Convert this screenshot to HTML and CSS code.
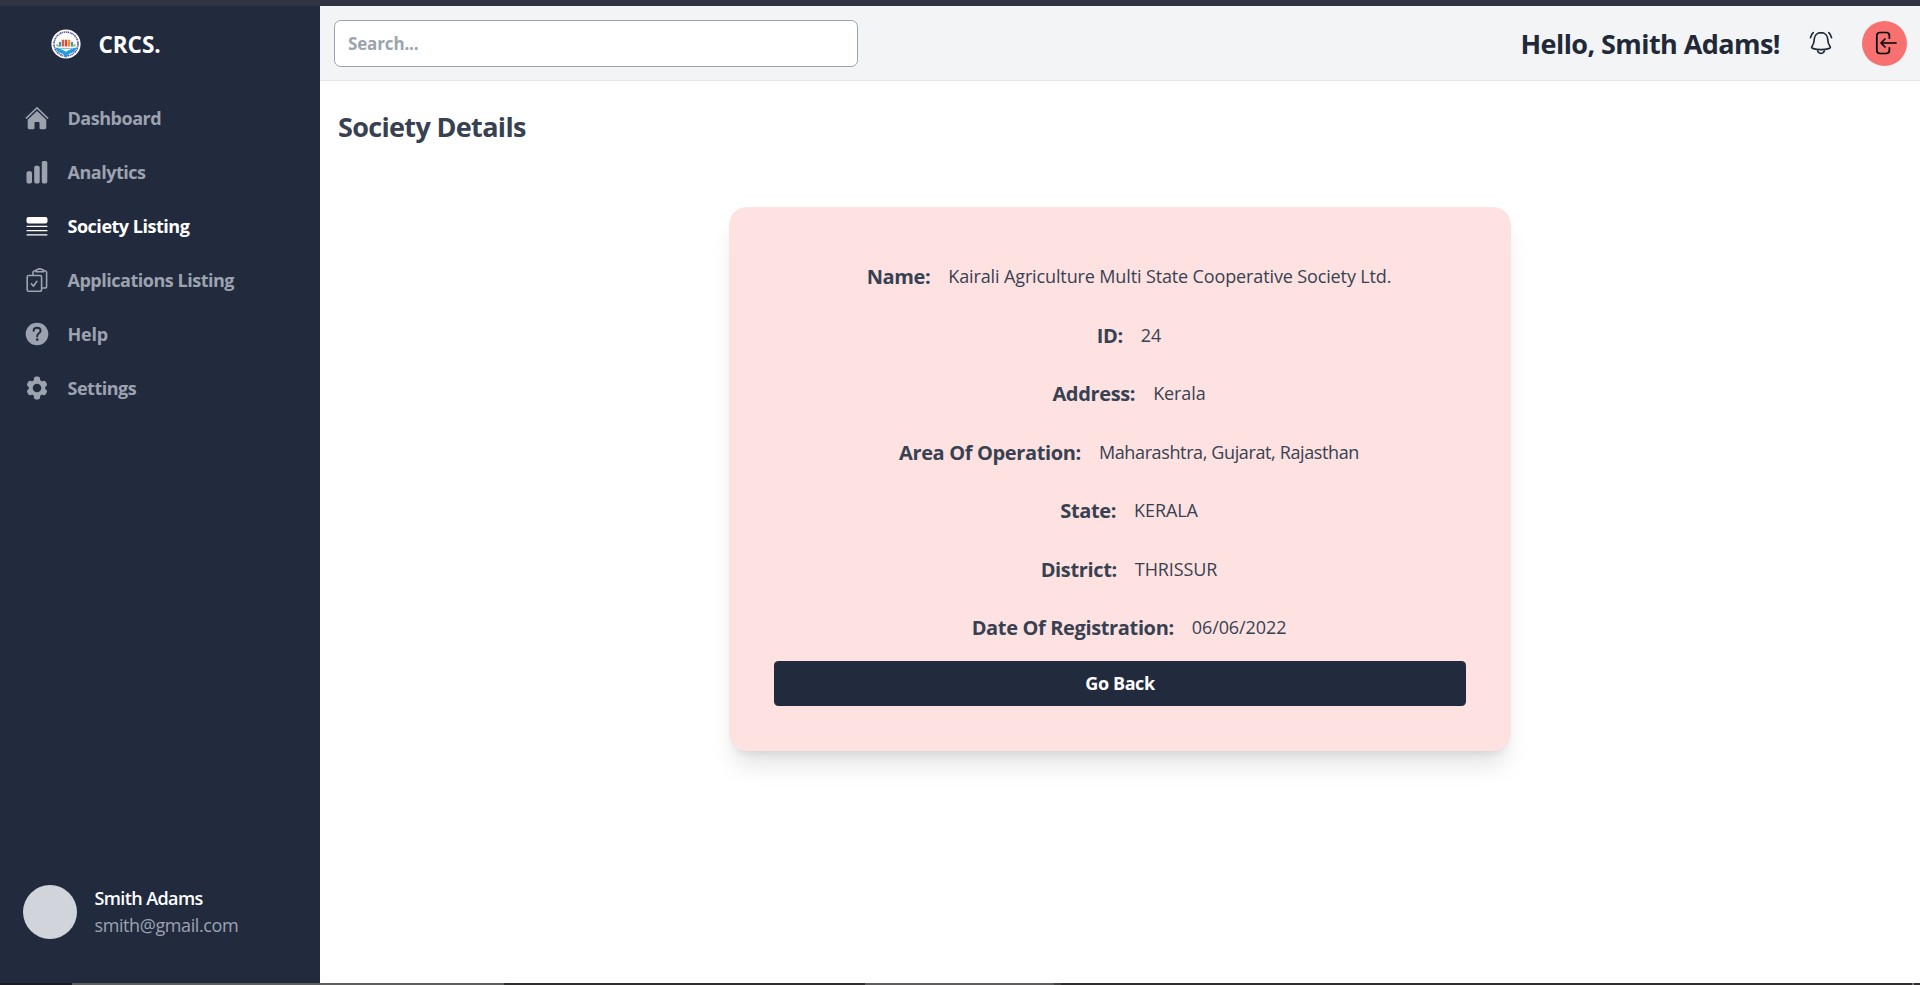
FILE: index.html
```html
<!DOCTYPE html>
<html lang="en">
<head>
<meta charset="utf-8">
<title>CRCS - Society Details</title>
<link rel="stylesheet" href="styles.css">
</head>
<body>
<div class="topline"></div>
<div class="app">
  <aside class="sidebar">
    <div class="brand">
      <svg class="brand-logo" viewBox="0 0 30 30">
        <circle cx="15" cy="15" r="14.6" fill="#fff"/>
        <circle cx="15" cy="15" r="12" fill="none" stroke="#56549a" stroke-width="1.7" stroke-dasharray="1.6 .7 .9 .6" pathLength="74"/>
        <path d="M4 18.500c3 0 5 1 7 2.200 2 .6 3 1 4 2.300 1-1.300 2-1.700 4-2.300 2-1.200 4-2.200 7-2.200-1.500 3.500-4.500 5.500-8 6.500L15 29l-3-4c-3.500-1-6.500-3-8-6.500z" fill="#239bdc"/>
        <path d="M9 19.500h12" stroke="#8fbfe0" stroke-width="1.300"/>
        <path d="M9 17.500v-4.500M21 17.500v-4.500" stroke="#3f9a9c" stroke-width="2.300"/>
        <path d="M12 17.500v-6.800" stroke="#e2574c" stroke-width="2.500"/>
        <path d="M15 17.500v-6.800" stroke="#e5443b" stroke-width="2.200"/>
        <path d="M18 17.500v-6.800" stroke="#f38a2c" stroke-width="2.500"/>
        <path d="M5.500 15.500l2 2M24.500 15.500l-2 2" stroke="#69b24b" stroke-width="1.200"/>
      </svg>
      <span class="brand-name">CRCS.</span>
    </div>
    <nav class="nav">
      <a class="nav-item">
        <svg class="icon" viewBox="0 0 24 24"><path d="M1.300 12.100 12 1.900l10.700 10.200" fill="none" stroke="currentColor" stroke-width="1.500" stroke-linecap="round" stroke-linejoin="round"/><path fill="currentColor" d="M12 4.900 2.700 13.700v7.700c0 1.100.8 1.900 1.900 1.900h3.700c.7 0 1.200-.5 1.200-1.200v-5.300c0-.4.300-.7.700-.7h3.600c.4 0 .7.300.7.700v5.300c0 .7.500 1.200 1.200 1.200h3.700c1.100 0 1.900-.8 1.900-1.900v-7.700z"/></svg>
        <span>Dashboard</span>
      </a>
      <a class="nav-item">
        <svg class="icon" viewBox="0 0 24 24" fill="currentColor"><rect x="1.500" y="11.300" width="5.500" height="12.200" rx="1.700"/><rect x="9.200" y="5.800" width="5.500" height="17.700" rx="1.700"/><rect x="16.800" y=".9" width="5.500" height="22.600" rx="1.700"/></svg>
        <span>Analytics</span>
      </a>
      <a class="nav-item active">
        <svg class="icon" viewBox="0 0 24 24" fill="currentColor"><rect x="1.500" y="3" width="21" height="6.500" rx="2"/><rect x="1.500" y="11.700" width="21" height="1.400" rx=".6"/><rect x="1.500" y="15.900" width="21" height="1.400" rx=".6"/><rect x="1.500" y="20.200" width="21" height="1.400" rx=".6"/></svg>
        <span>Society Listing</span>
      </a>
      <a class="nav-item">
        <svg class="icon" viewBox="0 0 24 24" fill="none" stroke="currentColor" stroke-width="1.600" stroke-linecap="round" stroke-linejoin="round"><rect x="2.200" y="7.500" width="14.400" height="15.800" rx="1.500"/><path d="M8 7.300V4.500A1.800 1.800 0 0 1 9.800 2.700h1M18.700 2.700h1.100a1.800 1.800 0 0 1 1.800 1.800v13.700a1.800 1.800 0 0 1-1.800 1.800H17"/><path d="M10.800 3.700V2.600c0-.4.300-.7.700-.7h.7C12.700 1.100 13.600.9 14.800.9s2.100.2 2.600 1h.6c.4 0 .7.300.7.700v1.100z"/><path d="m6.400 15.800 2 2.400 3.500-4.900"/></svg>
        <span>Applications Listing</span>
      </a>
      <a class="nav-item help">
        <svg class="icon" viewBox="0 0 24 24"><circle cx="12" cy="12" r="11.300" fill="currentColor"/><path d="M8.600 8.900c0-2 1.500-3.100 3.500-3.100s3.500 1.100 3.500 2.900c0 2.600-3.400 2.700-3.400 5.300v.4" fill="none" stroke="#222a3e" stroke-width="1.900" stroke-linecap="round"/><circle cx="12.200" cy="17.600" r="1.300" fill="#222a3e"/></svg>
        <span>Help</span>
      </a>
      <a class="nav-item">
        <svg class="icon" viewBox="1 1 22 22" fill="currentColor"><path fill-rule="evenodd" d="M11.078 1.500c-.917 0-1.699.663-1.850 1.567L9.050 4.889c-.02.12-.115.26-.297.348a7.493 7.493 0 0 0-.986.57c-.166.115-.334.126-.45.083L6.300 5.508a1.875 1.875 0 0 0-2.282.819l-.922 1.597a1.875 1.875 0 0 0 .432 2.385l.84.692c.095.078.17.229.154.43a7.598 7.598 0 0 0 0 1.139c.015.2-.059.352-.153.43l-.841.692a1.875 1.875 0 0 0-.432 2.385l.922 1.597a1.875 1.875 0 0 0 2.282.818l1.019-.382c.115-.043.283-.031.45.082.312.214.641.405.985.57.182.088.277.228.297.35l.178 1.821c.151.904.933 1.567 1.850 1.567h1.844c.916 0 1.699-.663 1.850-1.567l.178-1.822c.02-.12.114-.26.297-.349.344-.165.673-.356.985-.57.167-.114.335-.125.45-.082l1.020.382a1.875 1.875 0 0 0 2.280-.819l.923-1.597a1.875 1.875 0 0 0-.432-2.385l-.84-.692c-.095-.078-.17-.229-.154-.43a7.614 7.614 0 0 0 0-1.139c-.016-.2.059-.352.153-.43l.84-.692c.708-.582.891-1.590.433-2.385l-.922-1.597a1.875 1.875 0 0 0-2.282-.818l-1.020.382c-.114.043-.282.031-.449-.083a7.490 7.490 0 0 0-.985-.57c-.183-.087-.277-.227-.297-.348l-.179-1.822a1.875 1.875 0 0 0-1.850-1.567h-1.843ZM12 15.950a3.950 3.950 0 1 0 0-7.900 3.950 3.950 0 0 0 0 7.900Z"/></svg>
        <span>Settings</span>
      </a>
    </nav>
    <div class="user">
      <div class="avatar"></div>
      <div class="user-text">
        <div class="user-name">Smith Adams</div>
        <div class="user-mail">smith@gmail.com</div>
      </div>
    </div>
  </aside>
  <div class="main">
    <header class="header">
      <input class="search" type="text" placeholder="Search...">
      <div class="header-right">
        <span class="hello">Hello, Smith Adams!</span>
        <svg class="bell" viewBox="0 0 24 24" fill="none" stroke="currentColor" stroke-width="1.700" stroke-linecap="round" stroke-linejoin="round"><path d="M12 1.700c-3.900 0-6.500 2.700-6.700 6.300-.1 3.900-.7 5.300-2.200 7.200-.8 1.100-.5 1.900.5 2.200 2.700.9 5.500 1.300 8.400 1.300s5.700-.4 8.400-1.300c1-.3 1.300-1.100.5-2.200-1.500-1.900-2.100-3.300-2.200-7.200-.2-3.600-2.800-6.300-6.700-6.300zM8.500 18.700c.2 2.300 1.500 3.600 3.500 3.600s3.300-1.300 3.500-3.600M4.200 1.700C2.800 3 1.900 4.700 1.500 6.700M19.800 1.700c1.400 1.300 2.300 3 2.700 5"/></svg>
        <button class="logout" aria-label="Log out">
          <svg viewBox="0 0 24 24" fill="none" stroke="currentColor" stroke-width="1.700" stroke-linecap="round" stroke-linejoin="round"><path d="M16.400 7.200V4.700A3.200 3.200 0 0 0 13.200 1.500H7a3.200 3.200 0 0 0-3.200 3.200v14.600A3.200 3.200 0 0 0 7 22.500h6.200a3.200 3.200 0 0 0 3.200-3.200v-2.500M23 12H8.200M12 8l-4 4 4 4"/></svg>
        </button>
      </div>
    </header>
    <main class="content">
      <h1 class="title">Society Details</h1>
      <section class="card">
        <div class="row name"><span class="label">Name:</span><span class="value">Kairali Agriculture Multi State Cooperative Society Ltd.</span></div>
        <div class="row"><span class="label">ID:</span><span class="value">24</span></div>
        <div class="row"><span class="label">Address:</span><span class="value">Kerala</span></div>
        <div class="row area"><span class="label">Area Of Operation:</span><span class="value">Maharashtra, Gujarat, Rajasthan</span></div>
        <div class="row"><span class="label">State:</span><span class="value">KERALA</span></div>
        <div class="row"><span class="label">District:</span><span class="value">THRISSUR</span></div>
        <div class="row"><span class="label">Date Of Registration:</span><span class="value">06/06/2022</span></div>
        <button class="back">Go Back</button>
      </section>
    </main>
  </div>
</div>
<div class="bottomline"></div>
</body>
</html>
```
FILE: styles.css
```css
* { box-sizing: border-box; margin: 0; padding: 0; }

body {
  display: flex;
  flex-direction: column;
  height: 985px;
  overflow: hidden;
  background: #fff;
  color: #374151;
  font: 18px/27px "Open Sans", "Noto Sans", sans-serif;
}

.topline { flex: none; height: 6px; background: #323443; }
.bottomline {
  flex: none;
  height: 2px;
  background: linear-gradient(90deg, #1c1b25 72px, #5f5f5f 72px 504px, #302e2f 504px 865px, #5f5d5e 865px 1054px, #454344 1054px 1061px, #302e2f 1061px 1912px, #777 1912px 1914px, #302e2f 1914px);
}

.app { flex: 1; display: flex; min-height: 0; }

.sidebar {
  flex: none;
  display: flex;
  flex-direction: column;
  width: 320px;
  background: #222a3e;
  color: #9ca3af;
}

.brand { display: flex; align-items: center; gap: 18px; height: 76px; padding-left: 50.5px; }
.brand-logo { width: 30px; height: 30px; }
.brand-name { color: #fff; font-size: 22.5px; font-weight: 700; letter-spacing: -0.05px; }

.nav { display: flex; flex-direction: column; gap: 9px; padding: 13.5px 24.5px 0; }
.nav-item { display: flex; align-items: center; gap: 19px; height: 45px; font-weight: 700; letter-spacing: -0.48px; }
.nav-item.active { color: #fff; }
.nav-item.help { letter-spacing: -0.2px; }
.icon { flex: none; width: 24px; height: 24px; }

.user { display: flex; gap: 17.5px; margin-top: auto; padding: 0 23px 44px; }
.avatar { width: 54px; height: 54px; border-radius: 50%; background: #d1d5db; }
.user-name { color: #fff; font-weight: 650; letter-spacing: -0.6px; }
.user-mail { letter-spacing: -0.4px; }

.main { flex: 1; display: flex; flex-direction: column; min-width: 0; }
.header {
  display: flex;
  align-items: center;
  justify-content: space-between;
  height: 75px;
  padding: 0 13px 0 14px;
  background: #f3f4f6;
  border-bottom: 1px solid #e5e7eb;
}
.search {
  width: 524px;
  height: 47px;
  padding: 0 13px;
  border: 1px solid #9ca3af;
  border-radius: 6.75px;
  background: #fff;
  font: 700 17px "Open Sans", sans-serif;
  letter-spacing: -0.15px;
}
.search::placeholder { color: #9ca3af; opacity: 1; }
.header-right { display: flex; align-items: center; color: #1f2937; }
.hello { padding-top: 2px; font-size: 27px; font-weight: 700; line-height: 36px; letter-spacing: -0.57px; }
.bell { width: 24px; height: 24px; margin: 0 29px; }
.logout {
  display: grid;
  place-items: center;
  width: 45px;
  height: 45px;
  border: 0;
  border-radius: 50%;
  background: #f87171;
  color: #000;
}
.logout svg { width: 24px; height: 24px; }

.content { display: flex; flex-direction: column; padding: 28px 18px 0; }
.title { font-size: 27px; font-weight: 690; line-height: 36px; letter-spacing: -0.66px; }
.card {
  align-self: center;
  width: 782px;
  margin-top: 62px;
  padding: 45px;
  border-radius: 18px;
  background: #fee2e2;
  box-shadow: 0 20px 25px -5px rgba(0, 0, 0, .1), 0 8px 10px -6px rgba(0, 0, 0, .1);
}
.row { display: flex; justify-content: center; height: 58.5px; padding-top: 9px; }
.row:nth-last-child(2) { height: 58px; }
.label { margin: 0 18px; font-size: 20px; font-weight: 680; line-height: 32px; letter-spacing: -0.36px; }
.value { font-weight: 500; line-height: 30px; letter-spacing: -0.1px; }
.name .value { letter-spacing: -0.13px; }
.area .value { letter-spacing: -0.38px; }
.back {
  display: block;
  width: 100%;
  height: 45px;
  border: 0;
  border-radius: 4.5px;
  background: #222a3e;
  color: #fff;
  font: 700 18px/27px "Open Sans", sans-serif;
  letter-spacing: -0.4px;
}
```
